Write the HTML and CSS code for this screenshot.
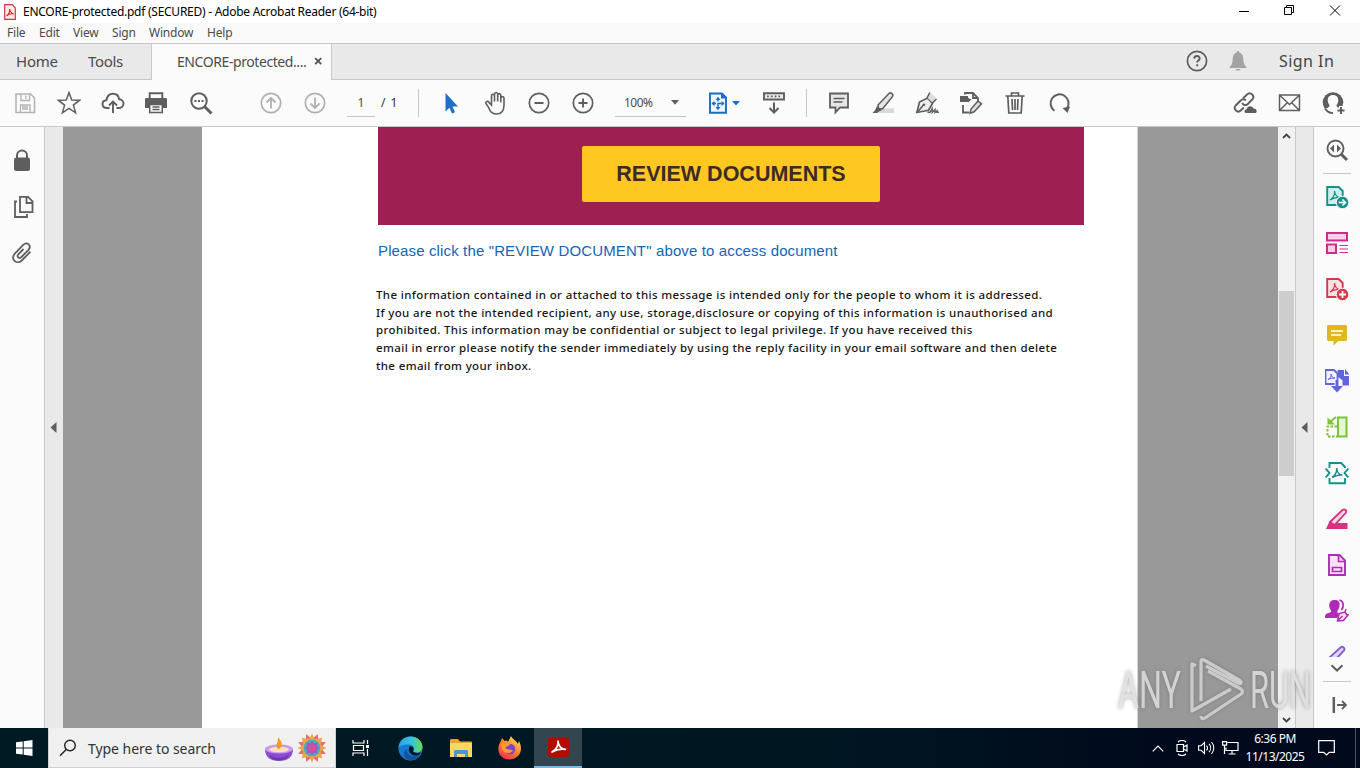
FILE: index.html
```html
<!DOCTYPE html>
<html lang="en">
<head>
    <meta charset="UTF-8">
    <meta name="viewport" content="width=device-width, initial-scale=1.0">
    <title>ENCORE-protected.pdf (SECURED) - Adobe Acrobat Reader (64-bit)</title>
    <link rel="stylesheet" href="styles.css">
</head>
<body>
    <header class="titlebar">
        <svg class="app-icon" width="12" height="16" viewBox="0 0 12 16"><path d="M.7.7h7.5l3.1 3.1v11.5H.7z" fill="#ffe9e9" stroke="#c33b42" stroke-width="1.2"/><path d="M2.500 11.800C5 10 6 7.500 5.700 5c.5 3 2 4.500 4 5-2.500-.5-5 0-7.200 1.800z" fill="none" stroke="#d9222a" stroke-width="1.100"/></svg>
        <span class="window-title">ENCORE-protected.pdf (SECURED) - Adobe Acrobat Reader (64-bit)</span>
        <div class="window-buttons">
            <svg width="46" height="23" viewBox="0 0 46 23"><path d="M19 11.500h10" stroke="#000"/></svg>
            <svg width="46" height="23" viewBox="0 0 46 23"><path d="M18.500 7.500h7v7h-7zM20.500 7.500v-2h7v7h-2" fill="none" stroke="#000"/></svg>
            <svg width="46" height="23" viewBox="0 0 46 23"><path d="M18 5.500l10 10M28 5.500l-10 10" stroke="#000"/></svg>
        </div>
    </header>

    <nav class="menubar">
        <span class="m-file">File</span><span class="m-edit">Edit</span><span class="m-view">View</span><span class="m-sign">Sign</span><span class="m-window">Window</span><span>Help</span>
    </nav>

    <div class="tabs">
        <span class="tab-home">Home</span>
        <span class="tab-tools">Tools</span>
        <div class="tab-active">
            <span>ENCORE-protected....</span>
            <svg width="9" height="9" viewBox="0 0 9 9"><path d="M1.200 1.200l6 6M7.200 1.200l-6 6" stroke="#555" stroke-width="1.900"/></svg>
        </div>
        <div class="tabs-right">
            <svg class="help" width="22" height="22" viewBox="0 0 22 22"><circle cx="11" cy="11" r="9.600" fill="none" stroke="#5e5e5e" stroke-width="1.700"/><path d="M8.200 8.600c.1-3.600 5.700-3.300 5.500 0-.1 1.700-2.500 1.800-2.500 4" fill="none" stroke="#5e5e5e" stroke-width="1.900"/><path d="M10.200 14.300h2v2h-2z" fill="#5e5e5e"/></svg>
            <svg class="bell" width="18" height="20" viewBox="0 0 18 20"><path d="M9 0c1 0 1.400.7 1.400 1.700 3 .7 3.800 3 3.900 6 .1 4.300 1 6.300 3 8.300v1H.7v-1c2-2 2.900-4 3-8.300.1-3 .9-5.300 3.900-6C7.600.7 8 0 9 0zM6.500 18h5c-.5 2-4.500 2-5 0z" fill="#a3a3a3"/></svg>
            <span>Sign In</span>
        </div>
    </div>

    <div class="toolbar">
        <div class="tool"><svg viewBox="0 0 24 24"><path d="M3 3h14.500L21.500 7v14.500H3z" fill="none" stroke="#b4b4b4" stroke-width="1.600"/><path d="M8 3v6.500h8.500V3M7.500 21v-7H17v7M12.800 4.500V8M9 16h6M9 18h6" fill="none" stroke="#b4b4b4" stroke-width="1.400"/></svg></div>
        <div class="tool"><svg viewBox="0 0 24 24"><path d="M12 1.500l2.700 7.400 8 .3-6.300 4.900 2.200 7.700L12 17.400l-6.600 4.400 2.200-7.700-6.300-4.900 8-.3z" fill="none" stroke="#5e5e5e" stroke-width="1.500"/></svg></div>
        <div class="tool"><svg viewBox="0 0 24 24"><path d="M8.500 17H6c-2.700 0-4.500-1.700-4.500-4S3.300 9.300 5.500 9.200C6 5.200 8.700 2.700 12 2.700s5.700 2 6.200 5.600c2.500.1 4.300 2 4.300 4.300S20.700 17 18.300 17h-2.800M12 22V10.500M8 14.500l4-4 4 4" fill="none" stroke="#5e5e5e" stroke-width="1.900"/></svg></div>
        <div class="tool print"><svg viewBox="0 0 24 24"><path d="M5.700 7.500V2.300h12.600v5.200" fill="none" stroke="#5e5e5e" stroke-width="1.900"/><path d="M1 8.500C1 7.500 1.700 7 2.500 7h19c.8 0 1.500.5 1.500 1.500V17h-4v-3.500H5V17H1z" fill="#5e5e5e"/><path d="M5.700 13.500h12.600V21.500H5.700zM8.500 16h7M8.500 18.500h7" fill="none" stroke="#5e5e5e" stroke-width="1.500"/></svg></div>
        <div class="tool"><svg viewBox="0 0 24 24"><circle cx="10" cy="10" r="7.700" fill="none" stroke="#5e5e5e" stroke-width="2"/><path d="M15.500 15.500l7 7" stroke="#5e5e5e" stroke-width="3"/><path d="M5.500 9h2v2h-2zM9 9h2v2H9zM12.500 9h2v2h-2z" fill="#5e5e5e"/></svg></div>
        <div class="tool page-up"><svg viewBox="0 0 24 24"><circle cx="12" cy="12" r="9.700" fill="none" stroke="#b0b0b0" stroke-width="1.700"/><path d="M12 17.500V7M7.500 11.500L12 7l4.500 4.500" fill="none" stroke="#b0b0b0" stroke-width="1.800"/></svg></div>
        <div class="tool"><svg viewBox="0 0 24 24"><circle cx="12" cy="12" r="9.700" fill="none" stroke="#b0b0b0" stroke-width="1.700"/><path d="M12 6.500V17M7.500 12.500L12 17l4.500-4.500" fill="none" stroke="#b0b0b0" stroke-width="1.800"/></svg></div>
        <span class="page-input">1</span>
        <span class="page-total">/ 1</span>
        <div class="divider"></div>
        <div class="tool pointer"><svg viewBox="0 0 24 24"><path d="M6.500 2v18.500l4-3.700 2.500 5.700 3-1.300-2.500-5.600h5.500z" fill="#1f6fc4"/></svg></div>
        <div class="tool"><svg viewBox="0 0 24 24"><path d="M7.500 14V5c0-2.400 3-2.400 3 0v5.500V3.200c0-2.300 3.200-2.300 3.200 0v7.300V4.300c0-2.300 3.100-2.300 3.100 0V11.500V7.300c0-2.300 3.200-2.300 3.200 0v7c0 5-2.500 8.700-7.500 8.700s-6.500-3-8-6.700L2 12.700c-.8-2.200 1.800-3.200 3-1.300z" transform="translate(1)" fill="none" stroke="#5e5e5e" stroke-width="1.600"/></svg></div>
        <div class="tool"><svg viewBox="0 0 24 24"><circle cx="12" cy="12" r="9.700" fill="none" stroke="#5e5e5e" stroke-width="1.700"/><path d="M7.500 12h9" stroke="#5e5e5e" stroke-width="2"/></svg></div>
        <div class="tool"><svg viewBox="0 0 24 24"><circle cx="12" cy="12" r="9.700" fill="none" stroke="#5e5e5e" stroke-width="1.700"/><path d="M7.500 12h9M12 7.500v9" stroke="#5e5e5e" stroke-width="1.900"/></svg></div>
        <div class="zoom-box"><span>100%</span><svg width="8" height="5" viewBox="0 0 8 5"><path d="M0 0h8L4 4.800z" fill="#5e5e5e"/></svg></div>
        <svg class="fit" width="34" height="24" viewBox="0 0 34 24"><path d="M3 2.500h12l4 4v15.300H3z" fill="#eef5fd" stroke="#1b6bc0" stroke-width="1.900"/><path d="M14 2v5.500h5" fill="#1b6bc0"/><path d="M11 6.500v12M5 12.500h12" stroke="#1b6bc0" stroke-width="1.400" stroke-dasharray="4 1.500"/><path d="M8.500 9L11 6l2.500 3zM8.500 16L11 19l2.500-3zM7.500 10l-3 2.500 3 2.500zM14.500 10l3 2.500-3 2.500z" fill="#1b6bc0"/><path d="M25 10h8l-4 4.500z" fill="#1b6bc0"/></svg>
        <div class="tool"><svg viewBox="0 0 24 24"><path d="M2 2.200h20v6.300H2z" fill="#eee" stroke="#5e5e5e" stroke-width="1.900"/><path d="M5 5.400h14" stroke="#5e5e5e" stroke-width="1.700" stroke-dasharray="1.800 2"/><path d="M12 11.500V21M7.500 17l4.500 4.500 4.500-4.500" fill="none" stroke="#5e5e5e" stroke-width="2"/></svg></div>
        <div class="divider"></div>
        <div class="tool comment"><svg viewBox="0 0 24 24"><path d="M3 2.500h18v14h-8L8.500 21.500v-5H3z" fill="#e6e6e6" stroke="#5e5e5e" stroke-width="1.800"/><path d="M6.500 7.500h11M6.500 11h9" stroke="#5e5e5e" stroke-width="1.400"/></svg></div>
        <div class="tool"><svg viewBox="0 0 24 24"><path d="M8 17.500h15V22H7z" fill="#d9d9d9"/><path d="M7 14L18 2.500c1.700-1.600 5 .7 3.500 3L11.500 18l-4-.5z" fill="#e5e5e5" stroke="#5e5e5e" stroke-width="1.500"/><path d="M6 15l5 4-3 1.500-2 1.500H1.500l2.700-3z" fill="#5e5e5e"/></svg></div>
        <div class="tool"><svg viewBox="0 0 24 24"><path d="M1.800 21.500L4.500 11l8-4 5 5.500-4 6.800z" fill="#eee" stroke="#5e5e5e" stroke-width="1.700"/><path d="M12 6.500l3-4.500 6 4.500-3.500 5z" fill="#ddd"/><path d="M2.500 21l6-7M12 7l2.800-5.500M17.300 12l4.200-4" stroke="#5e5e5e" stroke-width="1.600"/><circle cx="9" cy="13.700" r="1.300" fill="#5e5e5e"/><path d="M12.500 21.300h2.500l2.200-3.800v4l2.800-3v3l2-1.700v1.500h2" fill="none" stroke="#5e5e5e" stroke-width="1.400"/></svg></div>
        <div class="tool"><svg viewBox="0 0 24 24"><path d="M6 3.500V2h8l5 5v3M14 2v5h5M4 14v7.500h6" fill="none" stroke="#5e5e5e" stroke-width="1.800"/><path d="M1 5h8v6H1zM8 6.500l4.500 2L9 11.500z" fill="#5e5e5e"/><path d="M12 18l7-8 3.500 2.800-7.300 8-4.200 1.500z" fill="#ddd" stroke="#5e5e5e" stroke-width="1.500"/></svg></div>
        <div class="tool"><svg viewBox="0 0 24 24"><path d="M2.500 5h19M8.500 5V2h7v3M4.800 5l1 17h12.400l1-17M9 8l.5 11M12 8v11M15 8l-.5 11" fill="none" stroke="#5e5e5e" stroke-width="1.700"/></svg></div>
        <div class="tool"><svg viewBox="0 0 24 24"><path d="M7.500 19.800A9 9 0 1 1 20 17.500" fill="none" stroke="#5e5e5e" stroke-width="2"/><path d="M15.500 17l7.500-1.500-2.500 6.500z" fill="#5e5e5e"/></svg></div>
        <div class="tool share"><svg viewBox="0 0 24 24"><path d="M10 7.500l4-4c3.500-3.300 8.500 1.500 5.200 5l-4.700 4.700c-2 1.800-4.500.7-5.300-1.300M13 9.500c-1.500-1.800-4-1.500-5.300 0L2.700 14.500c-3 3.700 1.800 8.200 5.300 4.800l2.800-2.800" fill="none" stroke="#5e5e5e" stroke-width="1.900"/><path d="M13 22c-2.500-1-1.500-3.700.5-3.700.8-3.500 5.200-4.500 7-.8 3.200-.2 4.200 3.500 2 4.500z" fill="#5e5e5e"/></svg></div>
        <div class="tool"><svg viewBox="0 0 24 24"><path d="M2.500 4h20v15.500h-20zM3 4.500l9.500 9 9.500-9M3 19l7-7M22 19l-7-7" fill="none" stroke="#5e5e5e" stroke-width="1.500"/></svg></div>
        <div class="tool"><svg viewBox="0 0 24 24"><circle cx="12" cy="11.500" r="10.300" fill="#5e5e5e"/><path d="M12 4c3.600 0 5.300 2.300 5.300 5.200 0 2.300-1.200 3.800-1.800 5 0 1.300.8 2 2.500 2.600L17 22H7.500l-3-4.500c2.500-1 4-1.300 4-3.300-.6-1.200-1.800-2.700-1.800-5C6.700 6.300 8.400 4 12 4z" fill="#fbfbfb"/><path d="M4 17.500c2 3.300 4.500 4.500 8 4.600" fill="none" stroke="#5e5e5e" stroke-width="1.800"/><path d="M20 15v9M15.500 19.500h9" stroke="#fbfbfb" stroke-width="4"/><path d="M20 16v7M16.500 19.500h7" stroke="#5e5e5e" stroke-width="2"/></svg></div>
    </div>

    <main class="workspace">
        <aside class="left-panel">
            <svg width="24" height="24" viewBox="0 0 24 24"><path d="M7 11V7.500a5 5 0 0 1 10 0V11" fill="none" stroke="#5e5e5e" stroke-width="2"/><rect x="4" y="9.500" width="16" height="13.500" rx="2.500" fill="#5e5e5e"/></svg>
            <svg width="24" height="24" viewBox="0 0 24 24"><path d="M10 2.900h8l4.500 4.500v10.800H10zM16.500 3v6h6M7 7.500H5v15.500h12V20" fill="none" stroke="#5e5e5e" stroke-width="1.800"/></svg>
            <svg width="24" height="24" viewBox="0 0 24 24"><path d="M20.500 11.700l-8.700 8.800c-5 4.800-12-1.500-7-6.800L13 5.200c4.200-4.200 9 .6 5.500 4.600L11.500 17c-2.700 2.500-5.200-.5-3-3l5-5" fill="none" stroke="#5e5e5e" stroke-width="1.800"/></svg>
        </aside>
        <div class="strip strip-left"><svg width="7" height="12" viewBox="0 0 7 12"><path d="M6.500 0v11L.5 5.500z" fill="#5e5e5e"/></svg></div>

        <div class="document">
            <article class="page">
                <div class="banner"><a class="review-button">REVIEW DOCUMENTS</a></div>
                <p class="hint">Please click the "REVIEW DOCUMENT" above to access document</p>
                <div class="disclaimer">
                    <p>The information contained in or attached to this message is intended only for the people to whom it is addressed.</p>
                    <p>If you are not the intended recipient, any use, storage,disclosure or copying of this information is unauthorised and</p>
                    <p>prohibited. This information may be confidential or subject to legal privilege. If you have received this</p>
                    <p>email in error please notify the sender immediately by using the reply facility in your email software and then delete</p>
                    <p>the email from your inbox.</p>
                </div>
            </article>
        </div>

        <div class="scrollbar">
            <svg width="9" height="6" viewBox="0 0 9 6"><path d="M1 5l3.500-3.500L8 5" fill="none" stroke="#444" stroke-width="1.800"/></svg>
            <div class="thumb"></div>
            <svg width="9" height="6" viewBox="0 0 9 6"><path d="M1 1l3.500 3.500L8 1" fill="none" stroke="#444" stroke-width="1.800"/></svg>
        </div>
        <div class="strip strip-right"><svg width="7" height="12" viewBox="0 0 7 12"><path d="M6.500 0v11L.5 5.500z" fill="#5e5e5e"/></svg></div>

        <aside class="right-panel">
            <div class="rtool"><svg viewBox="0 0 24 24"><circle cx="10.500" cy="10.500" r="8" fill="none" stroke="#5e5e5e" stroke-width="1.900"/><path d="M16 16l6 6" stroke="#5e5e5e" stroke-width="3"/><path d="M9 6.500v8l-4-4zM12 6.500v8l4-4z" fill="#5e5e5e"/></svg></div>
            <div class="rline"></div>
            <div class="rtool"><svg viewBox="0 0 24 24"><path d="M2.200 2h11.500l4 4v14H2.200z" fill="#cdf0ec" stroke="#14918a" stroke-width="1.900"/><path d="M5 15c4-2.500 5-5 4.500-9 .5 4 2 6 5.500 6.500-4-.5-7 .5-10 2.500" fill="none" stroke="#14918a" stroke-width="1.200"/><circle cx="17.500" cy="17.500" r="6.300" fill="#14918a" stroke="#fbfbfb"/><path d="M13.700 17.500h7M17.500 14.500l3 3-3 3" fill="none" stroke="#fff" stroke-width="1.600"/></svg></div>
            <div class="rtool"><svg viewBox="0 0 24 24"><path d="M2 2h20v7.500H2zM2 13.500h9v8.500H2z" fill="#f9cfe8" stroke="#cc2f8b" stroke-width="2"/><path d="M14.500 14.500H23M14.500 18H23M14.500 21.500H23" stroke="#cc2f8b" stroke-width="1.200"/></svg></div>
            <div class="rtool"><svg viewBox="0 0 24 24"><path d="M2.200 2h11.500l4 4v14H2.200z" fill="#ffe0e3" stroke="#d13a50" stroke-width="1.900"/><path d="M5 15c4-2.500 5-5 4.500-9 .5 4 2 6 5.500 6.500-4-.5-7 .5-10 2.500" fill="none" stroke="#d13a50" stroke-width="1.200"/><circle cx="17.500" cy="17.500" r="6.300" fill="#d13a50" stroke="#fbfbfb"/><path d="M14 17.500h7M17.500 14v7" stroke="#fff" stroke-width="1.800"/></svg></div>
            <div class="rtool"><svg viewBox="0 0 24 24"><path d="M3.500 2h17c.8 0 1.500.7 1.500 1.500v13c0 .8-.7 1.500-1.500 1.500h-7.200L8.500 22.500V18h-5c-.8 0-1.500-.7-1.500-1.500v-13C2 2.700 2.700 2 3.500 2z" fill="#e0b81e"/><path d="M6 8h12M6 12h10" stroke="#fff" stroke-width="1.700"/></svg></div>
            <div class="rtool"><svg viewBox="1 0 24 24"><path d="M1.500 1h8.500l3.500 3.500V15h-12z" fill="#f1f0ff" stroke="#6264de" stroke-width="1.800"/><path d="M4 10.500c2.500-1.500 3.500-3 3-5.500.5 2.500 1.500 4 4 4-3 0-5 .5-7 1.500" fill="none" stroke="#6264de"/><path d="M13.500 1H20v6h5.500v9.500h-7v-5l-3.500-3h-1.500zM21 0l4.500 5.500H21z" fill="#6264de"/><path d="M13 11v7" stroke="#fff" stroke-width="5"/><path d="M13 11v7" stroke="#6264de" stroke-width="3"/><path d="M7 17h12l-6 6.500z" fill="#6264de"/></svg></div>
            <div class="rtool"><svg viewBox="0 0 24 24"><path d="M13 2.500h8.500v19H13z" fill="#e4f7cf" stroke="#7bc433" stroke-width="2"/><path d="M12 11.500H2.500v10H12" fill="none" stroke="#7bc433" stroke-width="2" stroke-dasharray="2.500 1.500"/><path d="M11 2L5.500 6.500" stroke="#7bc433" stroke-width="2"/><path d="M2.500 2.500v7h7.500z" fill="#7bc433"/></svg></div>
            <div class="rtool"><svg viewBox="0 0 24 24"><path d="M4.500 7V2h11.700L20 6v1M4.500 17v5.200H20V17" fill="none" stroke="#14918a" stroke-width="1.900"/><path d="M.7 7.500L4.500 12 .7 16.500M23.300 7.500L19.500 12l3.800 4.500" fill="none" stroke="#14918a" stroke-width="1.900"/><path d="M7 16.500c4-2.500 5-5 4.700-9.500.5 5 2 7 5.800 7-4-.2-7 .5-10.500 2.500" fill="none" stroke="#14918a" stroke-width="1.500"/></svg></div>
            <div class="rtool"><svg viewBox="0 0 24 24"><path d="M10 16h12.500v6H1l3-3z" fill="#d63280"/><path d="M5 15L17.500 3c2-1.800 5 .8 3.200 3L9.500 18z" fill="#ffd3e5" stroke="#d63280" stroke-width="1.800"/><path d="M4.500 14.500l6 4-4 1.500-5.500 2z" fill="#d63280"/></svg></div>
            <div class="rtool"><svg viewBox="0 0 24 24"><path d="M4 2h10.500L20 7.500V22H4z" fill="#fae2fb" stroke="#b02bb5" stroke-width="1.900"/><path d="M13.500 2v6.500H20M7.500 14.500h9v4h-9z" fill="none" stroke="#b02bb5" stroke-width="1.700"/></svg></div>
            <div class="rtool"><svg viewBox="0 0 24 24"><path d="M9 1c8-1 6 8 3.500 10.500-.6 2.500.5 3 1.500 3.500L12 19H0c0-4 1-4.300 5-5.500 2-1 1-2 0-3.500C3.500 6 4 1.500 9 1z" fill="#b02bb5"/><path d="M14.500 1c5 1.500 4 7 2 10" fill="none" stroke="#b02bb5" stroke-width="1.800"/><path d="M12.500 22l1.500-7.500 6-1.500 2.500 3.500-4 5z" fill="#f6d9f8" stroke="#b02bb5" stroke-width="1.500"/><path d="M12.500 22l5-5M20 13l1-3M22 16l2.500-.5" stroke="#b02bb5" stroke-width="1.400"/></svg></div>
            <div class="rtool-cut"><svg width="24" height="12" viewBox="0 0 24 12"><path d="M4 13L15.500 2.500c2-1.700 5 .6 3.500 3L11 14" fill="#e2d4f8" stroke="#855fc9" stroke-width="1.900"/></svg></div>
            <svg class="more" width="14" height="8" viewBox="0 0 14 8"><path d="M1.500 1.200L7 6.500l5.500-5.300" fill="none" stroke="#5e5e5e" stroke-width="2"/></svg>
            <div class="rline"></div>
            <svg class="collapse" width="16" height="16" viewBox="0 0 16 16"><path d="M1.800 0v16" stroke="#5e5e5e" stroke-width="2.500"/><path d="M5 8h9M10 4l4 4-4 4" fill="none" stroke="#5e5e5e" stroke-width="1.800"/></svg>
        </aside>
    </main>

    <footer class="taskbar">
        <div class="start"><svg width="17" height="16" viewBox="0 0 17 16"><path d="M0 2.300L6.700 1.400v6.100H0zM7.700 1.200L16.500 0v7.500H7.700zM0 8.500h6.700v6.100L0 13.700zM7.700 8.500h8.800V16l-8.800-1.200z" fill="#fff"/></svg></div>
        <div class="search">
            <svg width="18" height="18" viewBox="0 0 18 18"><circle cx="11" cy="6.500" r="5.300" fill="none" stroke="#222" stroke-width="1.400"/><path d="M7.200 10.500L1 16.700" stroke="#222" stroke-width="1.500"/></svg>
            <span>Type here to search</span>
            <svg class="diwali" width="64" height="32" viewBox="0 0 64 32">
                <path d="M1 17c0 8 5 12 14 12s14-4 14-12z" fill="#8b4ccc"/><path d="M5 23c6 4 14 4 20 0-3 7-17 7-20 0z" fill="#6b34b0"/><ellipse cx="15" cy="17" rx="14" ry="4.500" fill="#c59af0"/><ellipse cx="15" cy="17.500" rx="10" ry="2.800" fill="#ffe2bb"/><path d="M14.500 17.500c-4.500-4 0-6.500-.5-12 4.500 4 5.500 9 .5 12z" fill="#f49a25"/>
                <g transform="translate(48 16) scale(.96)"><path d="M-6-14.500L0-9l6-5.500L6.400-6.400 14.500-6 9 0l5.500 6-8.100.4L6 14.500 0 9l-6 5.500-.4-8.100-8.100-.4L-9 0l-5.500-6 8.100-.4z" fill="#e8667c"/><path d="M0-15l3 6 7.600-1.600L9-3l6 3-6 3 1.600 7.600L3 9l-3 6-3-6-7.600 1.600L-9 3l-6-3 6-3-1.600-7.600L-3-9z" fill="#f3a73e"/><circle r="8.800" fill="#3fb4bb"/><path d="M0-8l2 3 4-1-1 4 3 2-3 2 1 4-4-1-2 3-2-3-4 1 1-4-3-2 3-2-1-4 4 1z" fill="#a05ac6"/><circle r="4" fill="#d94fa0"/></g>
            </svg>
        </div>
        <div class="app"><svg width="18" height="16" viewBox="0 0 18 16"><path d="M1 0v3h11V0M1 16v-3h11v3M1.500 5.500h10v5h-10zM15.500 0v4M15.500 9v7" fill="none" stroke="#fff" stroke-width="1.200"/><path d="M14 5h3v3h-3z" fill="#fff"/></svg></div>
        <div class="app edge"><svg width="25" height="25" viewBox="0 0 25 25"><defs><linearGradient id="eg" x1="0" x2="1"><stop offset="0" stop-color="#23a5e5"/><stop offset=".55" stop-color="#34c5d8"/><stop offset="1" stop-color="#72d94f"/></linearGradient></defs><circle cx="12.500" cy="12.500" r="12" fill="#1978d0"/><path d="M.5 12C1 4 7 .5 12.500.5c7 0 12 5 12 10.500 0 5-6 7-9.500 4.500 3-4-1-7.500-5-7C5 8.500 1.500 10 .5 12z" fill="url(#eg)"/><path d="M9 13c-1 5 4 9 13 6-3 4-7 6-11 5.300C4 22 5 15 9 13z" fill="#13539f"/><path d="M12 10c3.500.5 4.500 3 3 5.500 1 1.500 5 2 8 .7-1 3-3 3-5 3.200-6 .4-9-5-6-9.400z" fill="#001a24"/></svg></div>
        <div class="app"><svg width="22" height="19" viewBox="0 0 22 19"><path d="M0 1.500C0 .7.600 0 1.500 0H8l2 2.500h11c.6 0 1 .4 1 1V18H0z" fill="#e5a82d"/><path d="M0 4h22v14H0z" fill="#fbd766"/><path d="M4 18v-5.500c0-.8.700-1.500 1.500-1.500h11c.8 0 1.500.7 1.500 1.500V18h-3v-3H7v3z" fill="#4398d8"/></svg></div>
        <div class="app"><svg width="24" height="24" viewBox="0 0 24 24"><defs><linearGradient id="ff" x1=".8" y1="0" x2=".2" y2="1"><stop offset="0" stop-color="#ffe44b"/><stop offset=".5" stop-color="#ff8328"/><stop offset="1" stop-color="#f5285a"/></linearGradient></defs><path d="M3 5l1-3 2.500 3L9 4.500 10 6l3-6c1 3 5 4 7 8l1-3c3 6 2.500 11-1 15-5 5-13 4.500-17 0S0 9 3 5z" fill="url(#ff)"/><circle cx="12" cy="13" r="5.300" fill="#7a43d0"/><path d="M3 8c3-2 5 0 9 0-1 2.500-4 2-4.500 4C10 14.500 13 13 15 14.500c-3 4-9 3-11-1z" fill="#ff9a30"/></svg></div>
        <div class="app app-active"><svg width="21" height="20" viewBox="0 0 21 20"><rect width="21" height="20" rx="3" fill="#b30b00"/><path d="M4 15c5-3 6.500-6 6-11 .5 5.500 3 8 7.500 8.300C12 11.500 8 12.500 4 15z" fill="none" stroke="#fff" stroke-width="1.700" stroke-linejoin="round"/></svg></div>
        <div class="tray">
            <svg class="t-up" width="12" height="7" viewBox="0 0 12 7"><path d="M.7 6.300L6 1l5.300 5.300" fill="none" stroke="#fff" stroke-width="1.200"/></svg>
            <svg class="t-cam" width="12" height="16" viewBox="0 0 12 16"><path d="M2 2c2-2 6-2 8 0M2 14c2 2 6 2 8 0M1 4.500h6.500v7H1zM7.500 7L11 5v6L7.500 9z" fill="none" stroke="#fff" stroke-width="1.200"/></svg>
            <svg class="t-vol" width="17" height="14" viewBox="0 0 17 14"><path d="M.6 4.700h2.500L6.500 1.500v11L3.100 9.300H.6zM8.500 4.500c1.300 1.500 1.300 3.500 0 5M11 2.800c2.200 2.400 2.200 6 0 8.400M13.500 1c3 3.400 3 8.600 0 12" fill="none" stroke="#fff" stroke-width="1.100"/></svg>
            <svg class="t-net" width="17" height="14" viewBox="0 0 17 14"><path d="M5.500 1.500h10.500v8H4v-3M10 9.500v3.500M6.500 13h7M.6.600h4v3.500h-4zM2.500 4v9" fill="none" stroke="#fff" stroke-width="1.200"/></svg>
            <div class="clock"><span class="time">6:36 PM</span><span class="date">11/13/2025</span></div>
            <svg class="t-note" width="17" height="16" viewBox="0 0 17 16"><path d="M.7.700h15.600v11.600h-5L8.500 15l-2.800-2.700h-5z" fill="none" stroke="#fff" stroke-width="1.200"/></svg>
            <div class="show-desktop"></div>
        </div>
    </footer>

    <svg class="watermark" width="210" height="66" viewBox="0 0 210 66">
        <text x="3" y="52" textLength="63" lengthAdjust="spacingAndGlyphs">ANY</text>
        <g fill="none" stroke="#d4d4d4" stroke-width="3.200" stroke-linejoin="round"><path d="M81 9.500l-4-1.500v47l39-22"/><path d="M86 45V5.500c0-2 1-2.500 3-1.500l36 20.500c2 1.500 1 4-1 3L91 10"/><path d="M86 60c0 2.500 1.500 3.500 4 2l36-24c2-1.500 2-3.500 0-5L93 15"/></g>
        <text x="135" y="52" textLength="61" lengthAdjust="spacingAndGlyphs">RUN</text>
    </svg>
</body>
</html>
```

FILE: styles.css
```css
* {
    box-sizing: border-box;
}
body {
    margin: 0;
    width: 1360px;
    height: 768px;
    overflow: hidden;
    display: flex;
    flex-direction: column;
    position: relative;
    background: #fff;
    color: #4b4b4b;
    font-family: "Noto Sans", "Open Sans", sans-serif;
}
svg {
    display: block;
    flex: none;
}
p {
    margin: 0;
}
span {
    white-space: nowrap;
}

/* window chrome */
.titlebar {
    height: 23px;
    display: flex;
    align-items: center;
    padding-left: 4px;
    color: #000;
    font-size: 12px;
}
.window-title {
    margin-left: 7px;
    letter-spacing: -0.26px;
}
.window-buttons {
    margin-left: auto;
    display: flex;
    padding-right: 2px;
}
.menubar {
    height: 20px;
    display: flex;
    align-items: center;
    padding: 0 0 1px 7px;
    background: #fafafa;
    font-size: 12px;
    letter-spacing: -0.2px;
}
.m-file {
    width: 32px;
}
.m-edit {
    width: 34px;
}
.m-view {
    width: 39px;
}
.m-sign {
    width: 37px;
}
.m-window {
    width: 58px;
}
.tabs {
    height: 37px;
    display: flex;
    align-items: center;
    background: #e9e9e9;
    border-top: 1px solid #c8c8c8;
    border-bottom: 1px solid #c8c8c8;
    font-size: 15px;
}
.tab-home {
    width: 72px;
    padding: 0 0 2px 16px;
    letter-spacing: -0.2px;
}
.tab-tools {
    width: 79px;
    padding: 0 0 2px 16px;
    letter-spacing: -0.3px;
}
.tab-active {
    width: 181px;
    height: 36px;
    align-self: flex-start;
    display: flex;
    align-items: center;
    justify-content: space-between;
    padding: 0 8px 1px 25px;
    background: #fbfbfb;
    border-left: 1px solid #c8c8c8;
    border-right: 1px solid #c8c8c8;
    font-size: 14px;
    letter-spacing: -0.42px;
}
.tabs-right {
    margin-left: auto;
    display: flex;
    align-items: center;
    width: 174px;
    padding-bottom: 2px;
    font-size: 16px;
    letter-spacing: 0.45px;
    color: #444;
}
.bell {
    margin: 0 32px 0 21px;
}

/* toolbar */
.toolbar {
    height: 47px;
    display: flex;
    align-items: center;
    padding: 0 5px 0 3px;
    background: #fbfbfb;
    border-bottom: 1px solid #c8c8c8;
    font-size: 12px;
}
.tool {
    width: 44px;
    flex: none;
    display: flex;
    justify-content: center;
}
.tool svg {
    width: 24px;
    height: 24px;
}
.print {
    padding-right: 2px;
}
.page-up {
    margin-left: 26px;
}
.page-input {
    width: 28px;
    height: 28px;
    line-height: 27px;
    margin-left: 10px;
    text-align: center;
    border-bottom: 1px solid #c4c4c4;
}
.page-total {
    width: 37px;
    padding: 0 0 1px 6px;
    color: #333;
    word-spacing: 2px;
}
.divider {
    width: 1px;
    height: 28px;
    background: #c8c8c8;
    margin-left: 6px;
}
.pointer {
    margin-left: 10px;
}
.zoom-box {
    width: 71px;
    height: 28px;
    margin-left: 10px;
    padding: 0 7px 0 9px;
    display: flex;
    align-items: center;
    justify-content: space-between;
    border-bottom: 1px solid #c4c4c4;
    letter-spacing: -0.5px;
}
.fit {
    margin: 0 11px 0 21px;
}
.comment {
    margin-left: 10px;
}
.fit ~ .divider {
    margin-left: 10px;
}
.share {
    margin-left: auto;
}

/* workspace */
.workspace {
    flex: 1;
    min-height: 0;
    display: flex;
}
.left-panel {
    width: 45px;
    padding: 21px 0 0 10px;
    display: flex;
    flex-direction: column;
    gap: 22px;
    background: #fbfbfb;
    border-right: 1px solid #c8c8c8;
}
.strip {
    width: 18px;
    display: flex;
    align-items: center;
    justify-content: center;
    background: #e9e9e9;
}
.strip-right {
    width: 19px;
    border-left: 1px solid #c8c8c8;
    border-right: 1px solid #c8c8c8;
}
.strip svg {
    margin-right: 1px;
}
.document {
    width: 1215px;
    display: flex;
    padding-left: 139px;
    background: #999;
}
.page {
    width: 936px;
    padding-left: 174px;
    background: #fff;
    border-right: 1px solid #d5d5d5;
}
.banner {
    width: 706px;
    height: 98px;
    margin-left: 2px;
    padding: 19px 0 0 204px;
    background: #9e1f52;
}
.review-button {
    display: block;
    width: 298px;
    height: 56px;
    line-height: 56px;
    border-radius: 2px;
    background: #ffc820;
    color: #3d2b26;
    font-family: "Liberation Sans", Arial, sans-serif;
    font-size: 21.5px;
    font-weight: bold;
    text-align: center;
}
.hint {
    margin: 17px 0 0 2px;
    color: #1565b5;
    font-family: "Liberation Sans", Arial, sans-serif;
    font-size: 15px;
    line-height: 18px;
    letter-spacing: 0.135px;
    white-space: nowrap;
}
.disclaimer {
    margin-top: 26px;
    color: #161616;
    font-size: 11.5px;
    font-weight: 500;
    line-height: 17.7px;
    letter-spacing: 0.37px;
    white-space: nowrap;
}
.scrollbar {
    width: 17px;
    display: flex;
    flex-direction: column;
    align-items: center;
    justify-content: space-between;
    padding: 6px 0 5px;
    background: #f1f1f1;
}
.thumb {
    width: 15px;
    height: 185px;
    margin-bottom: 89px;
    background: #cdcdcd;
}
.right-panel {
    flex: 1;
    display: flex;
    flex-direction: column;
    align-items: center;
    background: #fbfbfb;
}
.rtool {
    height: 46px;
    flex: none;
    display: flex;
    align-items: center;
}
.rtool svg {
    width: 24px;
    height: 24px;
}
.rline {
    width: 28px;
    height: 1px;
    flex: none;
    background: #c8c8c8;
}
.rtool-cut {
    height: 22px;
    padding-top: 11px;
}
.more {
    margin: 8px 0 9px;
}
.collapse {
    margin: 15px 0 0 5px;
}

/* windows taskbar */
.taskbar {
    height: 40px;
    display: flex;
    background: linear-gradient(90deg, #001a24, #001722 60%, #000a1c 85%);
    color: #fff;
}
.start {
    width: 48px;
    display: flex;
    align-items: center;
    justify-content: center;
}
.search {
    width: 288px;
    display: flex;
    align-items: center;
    padding: 0 7px 0 10px;
    background: #f0f0f0;
    border: 1px solid #d0d0d0;
    border-top-color: #f0f0f0;
    color: #333;
    font-size: 14px;
    letter-spacing: -0.05px;
}
.search span {
    margin-left: 11px;
}
.diwali {
    margin-left: auto;
}
.app {
    width: 49px;
    display: flex;
    align-items: center;
    justify-content: center;
}
.app-active {
    width: 48px;
    background: #33464f;
    border-bottom: 2px solid #76b9ed;
}
.edge {
    width: 51px;
}
.tray {
    margin-left: auto;
    display: flex;
    align-items: center;
    font-size: 12px;
}
.t-cam {
    margin-left: 12px;
}
.t-vol {
    margin-left: 10px;
}
.t-net {
    margin-left: 7px;
}
.clock {
    width: 58px;
    margin-left: 7px;
    display: flex;
    flex-direction: column;
    align-items: center;
    line-height: 18px;
    letter-spacing: -0.5px;
}
.t-note {
    margin-left: 14px;
}
.show-desktop {
    width: 5px;
    height: 40px;
    margin-left: 20px;
    border-left: 1px solid #4a5560;
}

/* watermark lies over the document and the panels */
.watermark {
    position: absolute;
    left: 1115px;
    top: 656px;
    opacity: 0.85;
    filter: drop-shadow(0 0 2px rgba(110, 110, 110, 0.7));
}
.watermark text {
    font-family: Roboto, sans-serif;
    font-size: 51px;
    font-weight: 400;
    fill: #dedede;
}
```
